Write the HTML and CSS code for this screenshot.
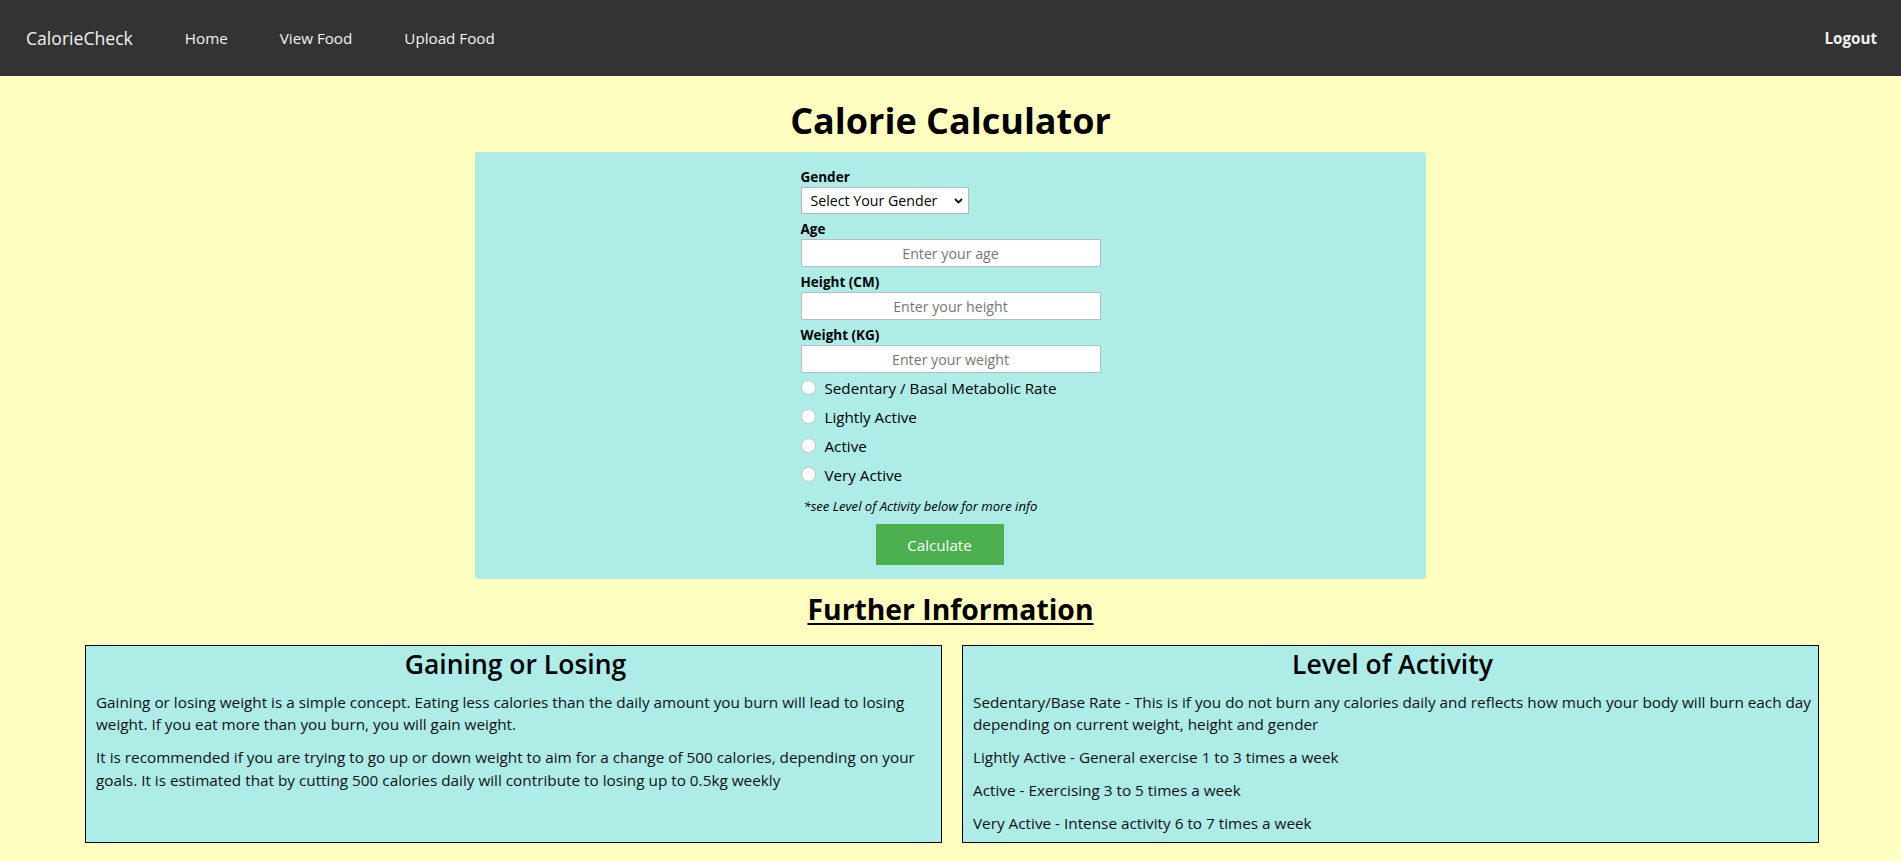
FILE: index.html
```html
<!DOCTYPE html>
<html lang="en">
<head>
<meta charset="utf-8">
<title>CalorieCheck - Calorie Calculator</title>
<link rel="stylesheet" href="styles.css">
</head>
<body>
<nav class="topnav">
  <a class="brand" href="#">CalorieCheck</a>
  <a class="navlink" href="#">Home</a>
  <a class="navlink" href="#">View Food</a>
  <a class="navlink" href="#">Upload Food</a>
  <a class="logout" href="#">Logout</a>
</nav>
<main>
  <h1 class="page-title">Calorie Calculator</h1>
  <section class="calc-box">
    <form class="calc-form">
      <label class="field-label first">Gender</label>
      <div class="select-wrap">
        <select class="gender-select">
          <option>Select Your Gender</option>
          <option>Male</option>
          <option>Female</option>
        </select>
        <svg class="chev" width="9" height="6" viewBox="0 0 9 6"><path d="M1 1 L4.5 4.5 L8 1" fill="none" stroke="#111" stroke-width="1.8"/></svg>
      </div>
      <label class="field-label">Age</label>
      <input class="field-input" type="text" placeholder="Enter your age">
      <label class="field-label">Height (CM)</label>
      <input class="field-input" type="text" placeholder="Enter your height">
      <label class="field-label">Weight (KG)</label>
      <input class="field-input" type="text" placeholder="Enter your weight">
      <div class="radios">
        <label class="radio-row"><input class="radio" type="radio" name="activity"><span>Sedentary / Basal Metabolic Rate</span></label>
        <label class="radio-row"><input class="radio" type="radio" name="activity"><span>Lightly Active</span></label>
        <label class="radio-row"><input class="radio" type="radio" name="activity"><span>Active</span></label>
        <label class="radio-row"><input class="radio" type="radio" name="activity"><span>Very Active</span></label>
      </div>
      <p class="note">*see Level of Activity below for more info</p>
      <button class="calc-btn" type="button">Calculate</button>
    </form>
  </section>
  <h2 class="further-title">Further Information</h2>
  <div class="info-row">
    <div class="info-box">
      <h3 class="info-title">Gaining or Losing</h3>
      <p>Gaining or losing weight is a simple concept. Eating less calories than the daily amount you burn will lead to losing weight. If you eat more than you burn, you will gain weight.</p>
      <p>It is recommended if you are trying to go up or down weight to aim for a change of 500 calories, depending on your goals. It is estimated that by cutting 500 calories daily will contribute to losing up to 0.5kg weekly</p>
    </div>
    <div class="info-box">
      <h3 class="info-title">Level of Activity</h3>
      <p>Sedentary/Base Rate - This is if you do not burn any calories daily and reflects how much your body will burn each day depending on current weight, height and gender</p>
      <p>Lightly Active - General exercise 1 to 3 times a week</p>
      <p>Active - Exercising 3 to 5 times a week</p>
      <p>Very Active - Intense activity 6 to 7 times a week</p>
    </div>
  </div>
</main>
</body>
</html>
```
FILE: styles.css
```css
* { box-sizing: border-box; }

body {
  margin: 0;
  background: #ffffc0;
  font-family: "Open Sans", "Noto Sans", "DejaVu Sans", sans-serif;
  color: #000;
}

.topnav {
  display: flex;
  align-items: center;
  height: 76px;
  padding: 0 24px 0 26px;
  background: #333333;
}

.topnav a {
  color: #f2f2f2;
  text-decoration: none;
}

.brand {
  font-size: 17.6px;
  margin-right: 26px;
}

.navlink {
  font-size: 15.2px;
  padding: 0 26px;
}

.logout {
  margin-left: auto;
  font-size: 15.2px;
  font-weight: 700;
}

.page-title {
  margin: 21px 0 7px;
  font-size: 36px;
  line-height: 48px;
  font-weight: 700;
  text-align: center;
}

.calc-box {
  width: 50%;
  margin: 0 auto;
  padding: 17px 0 14px;
  background: #aeece7;
  border-radius: 3px;
}

.calc-form {
  width: 300px;
  margin: 0 auto;
}

.field-label {
  display: block;
  margin: 7px 0 2px;
  font-size: 13.5px;
  line-height: 16px;
  font-weight: 700;
}

.field-label.first {
  margin-top: 0;
  margin-bottom: 2px;
}

.select-wrap {
  position: relative;
  width: 168px;
}

.gender-select {
  appearance: none;
  -webkit-appearance: none;
  display: block;
  width: 168px;
  height: 27px;
  padding: 0 0 0 9px;
  border: 1px solid #b5b5b5;
  border-radius: 0;
  background: #fff;
  font-family: inherit;
  font-size: 14.2px;
  color: #000;
}

.chev {
  position: absolute;
  right: 6px;
  top: 11px;
}

.field-input {
  display: block;
  width: 300px;
  height: 28px;
  padding: 0 6px;
  border: 1px solid #bcbcbc;
  background: #fff;
  font-family: inherit;
  font-size: 14.2px;
  text-align: center;
}

.field-input::placeholder {
  color: #767676;
}

.radios {
  margin-top: 0;
}

.radio-row {
  display: flex;
  align-items: center;
  height: 29px;
  font-size: 15.2px;
}

.radio {
  appearance: none;
  -webkit-appearance: none;
  width: 15px;
  height: 15px;
  margin: 0 9px 0 0;
  border: 1px solid #c4c4c4;
  border-radius: 50%;
  background: #fff;
}

.note {
  margin: 9px 0 0;
  padding-left: 3px;
  font-size: 13.1px;
  line-height: 16px;
  font-style: italic;
}

.calc-btn {
  display: block;
  width: 128px;
  height: 41px;
  margin: 10px 0 0 75px;
  border: none;
  background: #4caf50;
  color: #fff;
  font-family: inherit;
  font-size: 15.2px;
}

.further-title {
  margin: 10px 0 16px;
  font-size: 28.3px;
  line-height: 40px;
  font-weight: 700;
  text-align: center;
  text-decoration: underline;
  text-decoration-thickness: 2px;
  text-underline-offset: 3px;
}

.info-row {
  display: flex;
  justify-content: center;
  gap: 20px;
  padding-left: 3px;
}

.info-box {
  width: 857px;
  padding: 0 6px 0 10px;
  border: 1px solid #000;
  background: #aeece7;
}

.info-title {
  margin: 2px 0 9px;
  font-size: 26.5px;
  line-height: 32px;
  font-weight: 600;
  text-align: center;
}

.info-box p {
  margin: 10.5px 0;
  font-size: 15.3px;
  line-height: 22.5px;
  color: #111;
}

.info-box p:last-child {
  margin-bottom: 7px;
}
```
